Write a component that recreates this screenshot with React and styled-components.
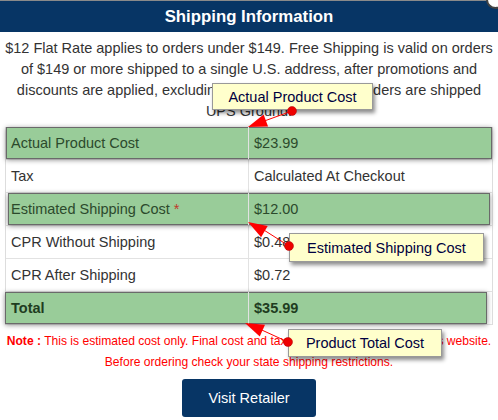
import React from "react";
import styled, { createGlobalStyle } from "styled-components";

const rows = [
  { label: "Actual Product Cost", value: "$23.99", hl: [1, 1] },
  { label: "Tax", value: "Calculated At Checkout" },
  { label: "Estimated Shipping Cost", value: "$12.00", hl: [3, 3], star: true },
  { label: "CPR Without Shipping", value: "$0.48" },
  { label: "CPR After Shipping", value: "$0.72" },
  { label: "Total", value: "$35.99", hl: [0, 6], bold: true },
];

const notes = [
  { text: "Actual Product Cost", x: 212, y: 83, w: 161, h: 27, dot: [292, 111], tip: [248, 127] },
  { text: "Estimated Shipping Cost", x: 289, y: 233, w: 195, h: 29, dot: [289, 246], tip: [248, 222] },
  { text: "Product Total Cost", x: 288, y: 329, w: 154, h: 28, dot: [288, 342], tip: [245, 323] },
];

// arrowhead polygon pointing from dot to tip
function head(dot, tip) {
  const dx = tip[0] - dot[0];
  const dy = tip[1] - dot[1];
  const len = Math.hypot(dx, dy);
  const ux = dx / len;
  const uy = dy / len;
  const bx = tip[0] - ux * 19;
  const by = tip[1] - uy * 19;
  const px = -uy * 6.5;
  const py = ux * 6.5;
  return `${tip[0]},${tip[1]} ${bx + px},${by + py} ${bx - px},${by - py}`;
}

function App() {
  return (
    <React.Fragment>
      <GlobalStyle />
      <Modal>
        <Close />
        <Header>Shipping Information</Header>
        <Intro>
          $12 Flat Rate applies to orders under $149. Free Shipping is valid on orders of $149 or more
          shipped to a single U.S. address, after promotions and discounts are applied, excluding taxes
          and duties. All orders are shipped UPS Ground.
        </Intro>
        <Table>
          {rows.map((r) => (
            <Row key={r.label} $hl={r.hl} $bold={r.bold}>
              <Cell>
                {r.label}
                {r.star && <Star> *</Star>}
              </Cell>
              <Cell $right>{r.value}</Cell>
            </Row>
          ))}
        </Table>
        <Note>
          <b>Note :</b> This is estimated cost only. Final cost and taxes are calculated on retailer's website.
          <br />
          Before ordering check your state shipping restrictions.
        </Note>
        <Actions>
          <Button>Visit Retailer</Button>
        </Actions>
        {notes.map((n) => (
          <Tip key={n.text} style={{ left: n.x, top: n.y, width: n.w, height: n.h }}>
            {n.text}
          </Tip>
        ))}
        <Overlay width="498" height="420">
          {notes.map((n) => (
            <g key={n.text}>
              <line x1={n.dot[0]} y1={n.dot[1]} x2={n.tip[0] + 8} y2={n.tip[1] + (n.tip[1] > n.dot[1] ? -3 : 3)} stroke="#ff0000" strokeWidth="1" />
              <polygon points={head(n.dot, n.tip)} fill="#ff0000" />
              <circle cx={n.dot[0]} cy={n.dot[1]} r="4.5" fill="#ee0000" stroke="#aa0000" strokeWidth="0.5" />
            </g>
          ))}
        </Overlay>
      </Modal>
    </React.Fragment>
  );
}

export default App;

const GlobalStyle = createGlobalStyle`
  * {
    box-sizing: border-box;
    margin: 0;
    padding: 0;
  }
  body {
    background: #fff;
    font-family: Arial, "Liberation Sans", sans-serif;
  }
`;

const Modal = styled.div`
  position: relative;
  width: 498px;
  height: 420px;
  background: #fff;
  overflow: hidden;
`;

const Close = styled.div`
  position: absolute;
  top: -10px;
  right: -7px;
  width: 19px;
  height: 19px;
  border-radius: 50%;
  background: #fff;
  border: 2px solid #444;
  z-index: 3;
`;

const Header = styled.div`
  height: 32px;
  background: #073565;
  border-top: 1px solid #8a8a8a;
  color: #fff;
  font-weight: bold;
  font-size: 16.8px;
  text-align: center;
  line-height: 31px;
`;

const Intro = styled.p`
  padding: 6px 4px 0;
  font-size: 14.5px;
  line-height: 21px;
  color: #333;
  text-align: center;
`;

const Table = styled.div`
  margin: 5px 5px 0;
  border-left: 1px solid #ddd;
  border-right: 1px solid #ddd;
`;

const Row = styled.div`
  position: relative;
  display: grid;
  grid-template-columns: 242px 1fr;
  height: 33px;
  border-bottom: 1px solid #e2e2e2;
  font-size: 14.5px;
  line-height: 32px;
  color: #333;
  ${(p) =>
    p.$hl &&
    `
    z-index: 1;
    color: #2c4a2c;
    &::before {
      content: "";
      position: absolute;
      top: 0;
      bottom: 0;
      left: ${p.$hl[0] - 1}px;
      right: ${p.$hl[1] - 1}px;
      background: #99cc99;
      border: 1px solid #6a6a6a;
      box-shadow: 0 1px 5px rgba(0, 0, 0, 0.45);
      z-index: -1;
    }
  `}
  ${(p) => p.$bold && `font-weight: bold; color: #1f3d1f;`}
`;

const Cell = styled.div`
  padding: 0 5px;
  white-space: nowrap;
  ${(p) => p.$right && `border-left: 1px solid #e2e2e2;`}
`;

const Star = styled.span`
  color: #c0392b;
`;

const Note = styled.p`
  margin-top: 6px;
  color: #ff0000;
  font-size: 12.1px;
  line-height: 21px;
  text-align: center;
`;

const Actions = styled.div`
  display: flex;
  justify-content: center;
  margin-top: 6px;
`;

const Button = styled.button`
  width: 134px;
  height: 38px;
  background: #073565;
  color: #fff;
  border: none;
  border-radius: 3px;
  font-family: Arial, "Liberation Sans", sans-serif;
  font-size: 14.5px;
`;

const Tip = styled.div`
  position: absolute;
  z-index: 2;
  display: flex;
  align-items: center;
  justify-content: center;
  background: #ffffcc;
  border: 1px solid #999;
  box-shadow: 2px 3px 4px rgba(0, 0, 0, 0.45);
  color: #000040;
  font-size: 14.5px;
`;

const Overlay = styled.svg`
  position: absolute;
  top: 0;
  left: 0;
  z-index: 2;
  pointer-events: none;
`;
